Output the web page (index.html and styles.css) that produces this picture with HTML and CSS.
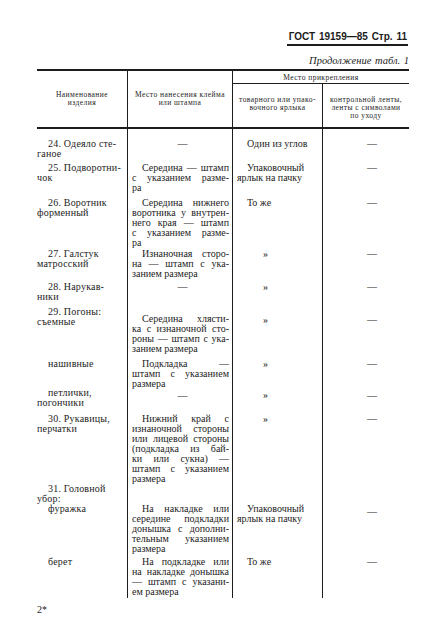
FILE: index.html
```html
<!DOCTYPE html>
<html lang="ru">
<head>
<meta charset="utf-8">
<link rel="stylesheet" href="styles.css">
</head>
<body>
<div class="page">
  <div class="runhead"><span class="runhead-text">ГОСТ 19159—85 Стр. 11</span></div>
  <div class="cont">Продолжение табл. 1</div>

  <div class="thead">
    <div class="h h1">Наименование<br>изделия</div>
    <div class="h h2">Место нанесения клейма<br>или штампа</div>
    <div class="h h34">Место прикрепления</div>
    <div class="h h3">товарного или упако-<br>вочного ярлыка</div>
    <div class="h h4">контрольной ленты,<br>ленты с символами<br>по уходу</div>
  </div>

  <div class="tbody">
    <div class="row r24">
      <div class="c c1"><span class="l">24. Одеяло сте-</span><span class="l">ганое</span></div>
      <div class="c c2 dash">—</div>
      <div class="c c3"><span class="l">Один из углов</span></div>
      <div class="c c4">—</div>
    </div>
    <div class="row r25">
      <div class="c c1"><span class="l">25. Подворотни-</span><span class="l">чок</span></div>
      <div class="c c2"><span class="l">Середина — штамп</span><span class="l">с указанием разме-</span><span class="l">ра</span></div>
      <div class="c c3"><span class="l">Упаковочный</span><span class="l">ярлык на пачку</span></div>
      <div class="c c4">—</div>
    </div>
    <div class="row r26">
      <div class="c c1"><span class="l">26. Воротник</span><span class="l">форменный</span></div>
      <div class="c c2"><span class="l">Середина нижнего</span><span class="l">воротника у внутрен-</span><span class="l">него края — штамп</span><span class="l">с указанием разме-</span><span class="l">ра</span></div>
      <div class="c c3"><span class="l">То же</span></div>
      <div class="c c4">—</div>
    </div>
    <div class="row r27">
      <div class="c c1"><span class="l">27. Галстук</span><span class="l">матросский</span></div>
      <div class="c c2"><span class="l">Изнаночная сторо-</span><span class="l">на — штамп с ука-</span><span class="l">занием размера</span></div>
      <div class="c c3 ditto">»</div>
      <div class="c c4">—</div>
    </div>
    <div class="row r28">
      <div class="c c1"><span class="l">28. Нарукав-</span><span class="l">ники</span></div>
      <div class="c c2 dash">—</div>
      <div class="c c3 ditto">»</div>
      <div class="c c4">—</div>
    </div>
    <div class="row r29">
      <div class="c c1"><span class="l">29. Погоны:</span><span class="l ind">съемные</span></div>
      <div class="c c2 pad7"><span class="l">Середина хлясти-</span><span class="l">ка с изнаночной сто-</span><span class="l">роны — штамп с ука-</span><span class="l">занием размера</span></div>
      <div class="c c3 ditto pad8">»</div>
      <div class="c c4 pad8">—</div>
    </div>
    <div class="row rnash">
      <div class="c c1"><span class="l">нашивные</span></div>
      <div class="c c2"><span class="l">Подкладка —</span><span class="l">штамп с указанием</span><span class="l">размера</span></div>
      <div class="c c3 ditto">»</div>
      <div class="c c4">—</div>
    </div>
    <div class="row rpetl">
      <div class="c c1"><span class="l">петлички,</span><span class="l">погончики</span></div>
      <div class="c c2 dash pad3">—</div>
      <div class="c c3 ditto pad2">»</div>
      <div class="c c4 pad3">—</div>
    </div>
    <div class="row r30">
      <div class="c c1"><span class="l">30. Рукавицы,</span><span class="l">перчатки</span></div>
      <div class="c c2"><span class="l">Нижний край с</span><span class="l">изнаночной стороны</span><span class="l">или лицевой стороны</span><span class="l">(подкладка из бай-</span><span class="l">ки или сукна) —</span><span class="l">штамп с указанием</span><span class="l">размера</span></div>
      <div class="c c3 ditto">»</div>
      <div class="c c4">—</div>
    </div>
    <div class="row r31">
      <div class="c c1"><span class="l">31. Головной</span><span class="l">убор:</span></div>
      <div class="c c2"></div>
      <div class="c c3"></div>
      <div class="c c4"></div>
    </div>
    <div class="row rfur">
      <div class="c c1"><span class="l">фуражка</span></div>
      <div class="c c2"><span class="l">На накладке или</span><span class="l">середине подкладки</span><span class="l">донышка с дополни-</span><span class="l">тельным указанием</span><span class="l">размера</span></div>
      <div class="c c3"><span class="l">Упаковочный</span><span class="l">ярлык на пачку</span></div>
      <div class="c c4 pad3">—</div>
    </div>
    <div class="row rber">
      <div class="c c1"><span class="l">берет</span></div>
      <div class="c c2"><span class="l">На подкладке или</span><span class="l">на накладке донышка</span><span class="l">— штамп с указани-</span><span class="l">ем размера</span></div>
      <div class="c c3"><span class="l">То же</span></div>
      <div class="c c4">—</div>
    </div>
  </div>

  <div class="folio">2*</div>
</div>
</body>
</html>
```

FILE: styles.css
```css
html, body {
  margin: 0;
  padding: 0;
  background: #ffffff;
}

body {
  color: #1c1c1c;
  font-family: "Liberation Serif", "DejaVu Serif", serif;
  font-size: 10px;
  line-height: 10px;
}

.page {
  width: 372px;
  padding: 31px 0 0 37px;
}

.runhead {
  display: flex;
  justify-content: flex-end;
  padding-right: 1px;
}

.runhead-text {
  font-family: "Liberation Sans", "DejaVu Sans", sans-serif;
  font-weight: bold;
  font-size: 10px;
  line-height: 12px;
  word-spacing: 1px;
  padding: 0 1px 1px 2px;
  border-bottom: 2px solid #1c1c1c;
}

.cont {
  margin-top: 9px;
  text-align: right;
  font-style: italic;
  font-size: 10.5px;
  line-height: 12px;
  word-spacing: 1px;
}

.thead {
  margin-top: 2px;
  display: grid;
  grid-template-columns: 90px 105px 90px 87px;
  grid-template-rows: 13px 43px;
  border-top: 2px solid #1c1c1c;
  border-bottom: 2px solid #1c1c1c;
}

.h {
  font-size: 7.5px;
  line-height: 8px;
  letter-spacing: 0.45px;
  text-align: center;
  display: flex;
  align-items: center;
  justify-content: center;
}

.h1 {
  grid-column: 1;
  grid-row: 1 / 3;
}

.h2 {
  grid-column: 2;
  grid-row: 1 / 3;
  border-left: 1px solid #1c1c1c;
}

.h34 {
  grid-column: 3 / 5;
  grid-row: 1;
  border-left: 1px solid #1c1c1c;
  border-bottom: 1px solid #1c1c1c;
  padding-top: 1px;
}

.h3 {
  grid-column: 3;
  grid-row: 2;
  border-left: 1px solid #1c1c1c;
  padding-bottom: 3px;
}

.h4 {
  grid-column: 4;
  grid-row: 2;
  border-left: 1px solid #1c1c1c;
  padding-top: 4px;
}

.row {
  display: grid;
  grid-template-columns: 90px 105px 90px 87px;
}

.r24 { height: 34px; }
.r24 .c { padding-top: 10px; }
.r25 { height: 35px; }
.r26 { height: 51px; }
.r27 { height: 33px; }
.r28 { height: 25px; }
.r29 { height: 52px; }
.rnash { height: 29px; }
.rpetl { height: 26px; }
.r30 { height: 70px; }
.r31 { height: 20px; }
.rfur { height: 53px; }
.rber { height: 41px; }

.pad2 { padding-top: 2px; }
.pad3 { padding-top: 3px; }
.pad7 { padding-top: 7px; }
.pad8 { padding-top: 8px; }

.c {
  box-sizing: border-box;
}

.c2, .c3, .c4 {
  border-left: 1px solid #1c1c1c;
}

.l {
  display: block;
}

.c1 {
  letter-spacing: 0.2px;
}

.c1 .l:first-child {
  text-indent: 11px;
}

.c1 .l.ind {
  text-indent: 0;
}

.c2 {
  padding-left: 4px;
  padding-right: 3px;
}

.c2 .l {
  text-align: justify;
  text-align-last: justify;
}

.c2 .l:first-child {
  text-indent: 10px;
}

.c2 .l:last-child {
  text-align-last: left;
}

.c2 .l:only-child {
  text-align-last: justify;
}

.dash {
  text-align: center;
  padding-left: 8px;
}

.c3 {
  padding-left: 4px;
}

.c3 .l:first-child {
  text-indent: 10px;
}

.ditto {
  padding-left: 30px;
}

.c4 {
  text-align: center;
  padding-left: 12px;
}

.folio {
  margin-top: 6px;
  line-height: 12px;
  font-size: 10px;
}
```
